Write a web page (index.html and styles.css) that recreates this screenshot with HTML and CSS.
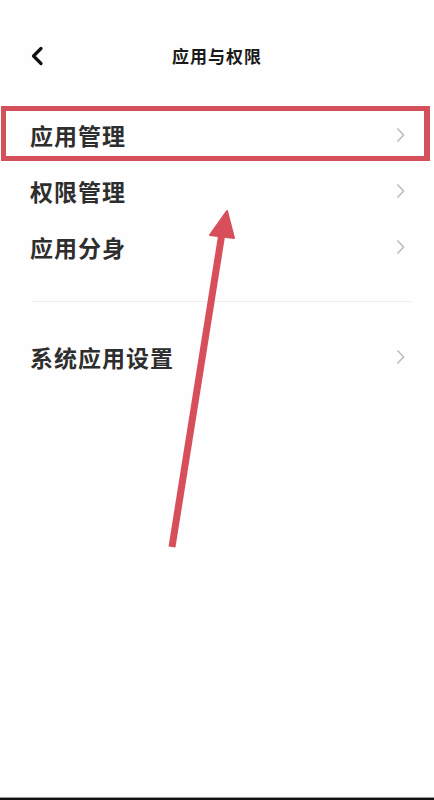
FILE: index.html
```html
<!DOCTYPE html>
<html lang="zh-CN">
<head>
<meta charset="utf-8">
<title>应用与权限</title>
<link rel="stylesheet" href="styles.css">
</head>
<body>
<div class="screen">
  <header class="topbar">
    <span class="back">
      <svg width="14" height="20" viewBox="0 0 14 20"><path d="M11 2.5 L3.5 10 L11 17.5" fill="none" stroke="#111" stroke-width="3.2" stroke-linecap="round" stroke-linejoin="round"/></svg>
    </span>
    <h1 class="title">应用与权限</h1>
    <span></span>
  </header>

  <ul class="list">
    <li class="row"><span class="label">应用管理</span><svg class="chev" width="9" height="16" viewBox="0 0 9 16"><path d="M1.5 1.5 L7.5 8 L1.5 14.5" fill="none" stroke="#bdbdbd" stroke-width="1.6"/></svg></li>
    <li class="row"><span class="label">权限管理</span><svg class="chev" width="9" height="16" viewBox="0 0 9 16"><path d="M1.5 1.5 L7.5 8 L1.5 14.5" fill="none" stroke="#bdbdbd" stroke-width="1.6"/></svg></li>
    <li class="row"><span class="label">应用分身</span><svg class="chev" width="9" height="16" viewBox="0 0 9 16"><path d="M1.5 1.5 L7.5 8 L1.5 14.5" fill="none" stroke="#bdbdbd" stroke-width="1.6"/></svg></li>
  </ul>

  <div class="divider"></div>

  <ul class="list">
    <li class="row"><span class="label">系统应用设置</span><svg class="chev" width="9" height="16" viewBox="0 0 9 16"><path d="M1.5 1.5 L7.5 8 L1.5 14.5" fill="none" stroke="#bdbdbd" stroke-width="1.6"/></svg></li>
  </ul>

  <div class="bottom-bar"></div>

  <div class="highlight"></div>
  <svg class="arrow" width="75" height="350" viewBox="0 0 75 350">
    <line x1="7" y1="342" x2="57" y2="28" stroke="#d64f5b" stroke-width="7"/>
    <polygon points="62,6 45,30 69,33" fill="#d64f5b" stroke="#d64f5b" stroke-width="2" stroke-linejoin="round"/>
  </svg>
</div>
</body>
</html>
```

FILE: styles.css
```css
* { box-sizing: border-box; }

html, body {
  margin: 0;
  padding: 0;
  background: #ffffff;
}

body {
  font-family: "Noto Sans CJK SC", "Noto Sans", sans-serif;
  color: #222;
}

.screen {
  position: relative;
  width: 434px;
  min-height: 800px;
  display: flex;
  flex-direction: column;
  background: #fefefe;
}

.topbar {
  display: grid;
  grid-template-columns: 1fr auto 1fr;
  align-items: center;
  height: 107px;
  padding: 4px 30px 0 30px;
}

.back {
  display: flex;
  align-items: center;
}

.title {
  margin: 0;
  font-size: 17px;
  font-weight: 700;
  letter-spacing: 1px;
  color: #1a1a1a;
  line-height: 24px;
}

.list {
  list-style: none;
  margin: 0;
  padding: 0;
}

.row {
  height: 56px;
  display: flex;
  align-items: center;
  justify-content: space-between;
  padding: 0 29px 0 30px;
}

.label {
  font-size: 23px;
  font-weight: 700;
  letter-spacing: 1px;
  color: #2e2e2e;
  line-height: 30px;
}

.chev {
  display: block;
}

.divider {
  height: 1px;
  background: #eeeeee;
  margin: 26px 22px 27px 32px;
}

.bottom-bar {
  margin-top: auto;
  height: 3px;
  background: #111;
  border-top: 1px solid #999;
}

.highlight {
  position: absolute;
  left: 1px;
  top: 106px;
  width: 429px;
  height: 55px;
  border: 5px solid #d4505a;
  border-right-width: 6px;
}

.arrow {
  position: absolute;
  left: 165px;
  top: 205px;
}
```
